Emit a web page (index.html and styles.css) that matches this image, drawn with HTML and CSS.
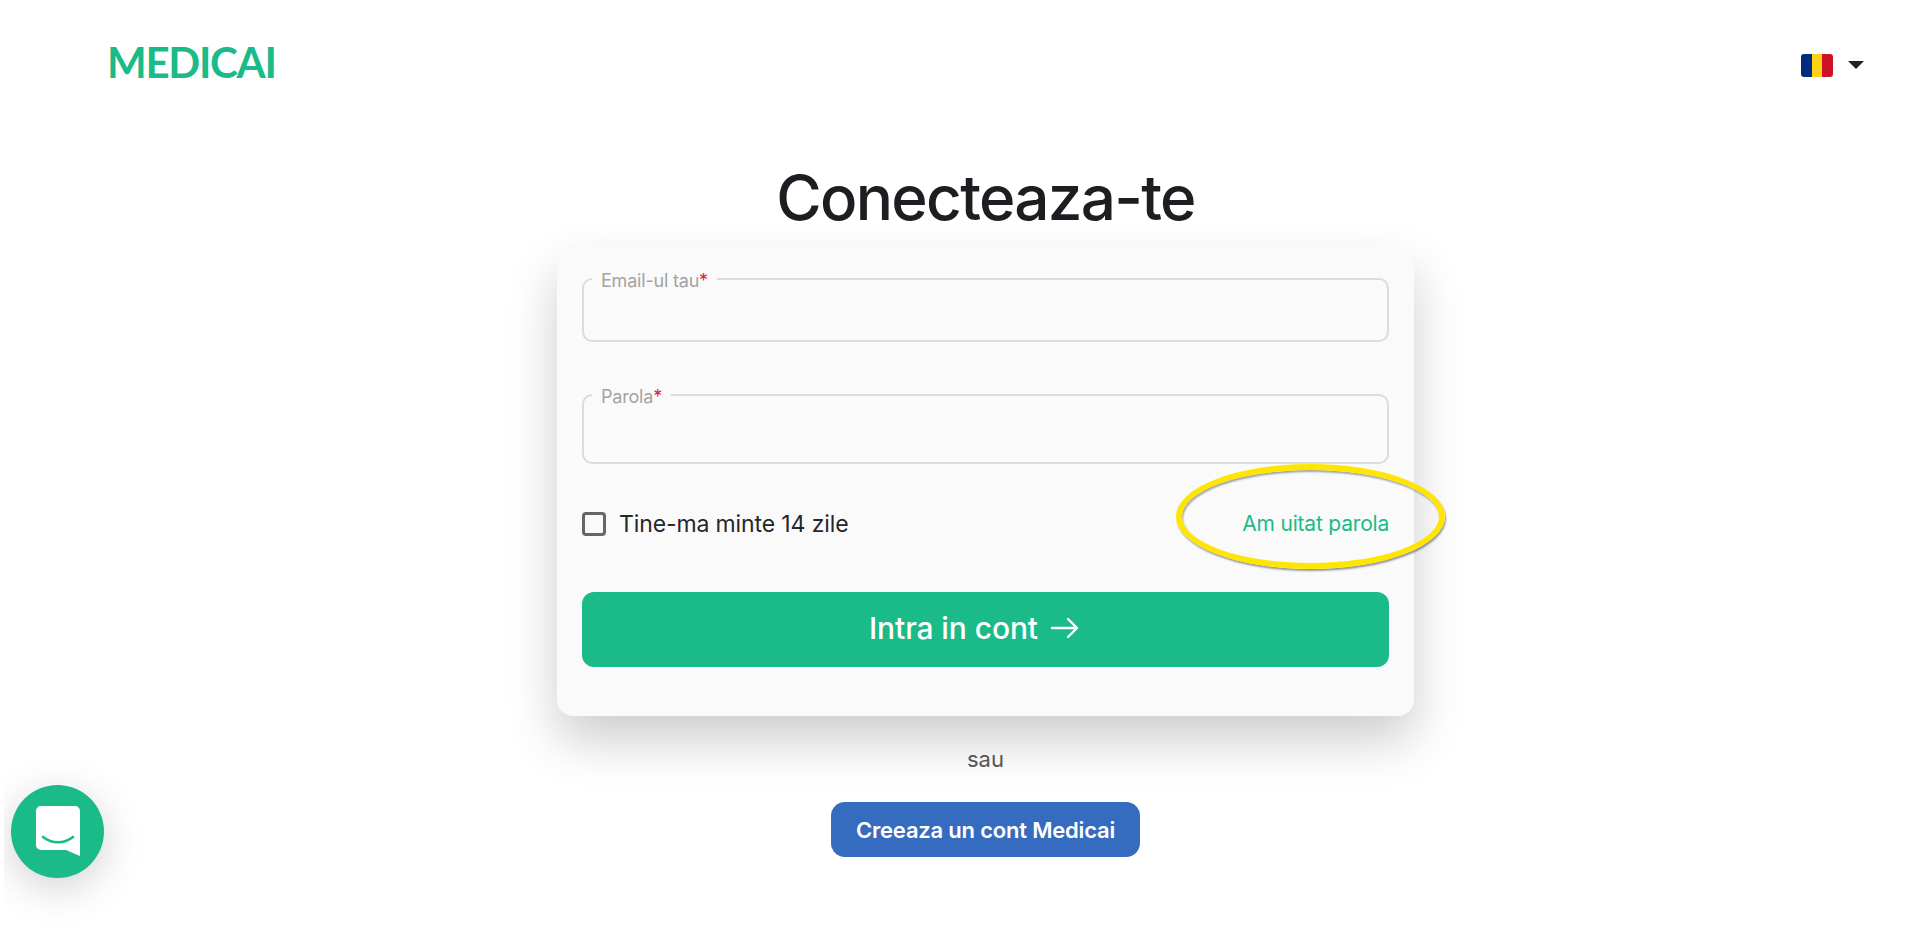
FILE: index.html
```html
<!DOCTYPE html>
<html lang="ro">
<head>
  <meta charset="UTF-8" />
  <meta name="viewport" content="width=device-width, initial-scale=1.0" />
  <title>Medicai - Conecteaza-te</title>
  <link rel="stylesheet" href="styles.css">
</head>
<body>
  <header class="topbar">
    <a class="logo" href="#">MEDICAI</a>
    <button class="lang" type="button" aria-label="Limba">
      <span class="flag"><i class="blue"></i><i class="yellow"></i><i class="red"></i></span>
      <span class="caret"></span>
    </button>
  </header>

  <main class="page">
    <h1>Conecteaza-te</h1>
    <form class="card">
      <fieldset class="field email">
        <legend>Email-ul tau<span class="req">*</span></legend>
        <input type="email">
      </fieldset>
      <fieldset class="field password">
        <legend>Parola<span class="req">*</span></legend>
        <input type="password">
      </fieldset>
      <div class="options">
        <label class="remember"><span class="box"></span>Tine-ma minte 14 zile</label>
        <a class="forgot" href="#">Am uitat parola<span class="ring"></span></a>
      </div>
      <button class="submit" type="button">Intra in cont
        <svg width="30" height="24" viewBox="0 0 30 24" fill="none" stroke="#fff" stroke-width="2.4" stroke-linecap="round" stroke-linejoin="round"><path d="M2 12h25M18 3l9 9-9 9"/></svg>
      </button>
    </form>
    <p class="or">sau</p>
    <a class="signup" href="#">Creeaza un cont Medicai</a>
  </main>

  <div class="chat-frame">
    <button class="chat" type="button" aria-label="Chat">
      <svg width="44" height="50" viewBox="0 0 44 50"><path d="M5 0h34a5 5 0 0 1 5 5v45l-14-6H5a5 5 0 0 1-5-5V5a5 5 0 0 1 5-5z" fill="#fff"/><path d="M7 31c9 7 21 7 30 0" fill="none" stroke="#1abb88" stroke-width="2.6" stroke-linecap="round"/></svg>
    </button>
  </div>
</body>
</html>
```

FILE: styles.css
```css
* {
  box-sizing: border-box;
}

body {
  margin: 0;
  height: 944px;
  overflow: hidden;
  font-family: 'Inter', sans-serif;
  background: #fff;
  color: #1c1e21;
}

.topbar {
  display: flex;
  justify-content: space-between;
  align-items: center;
  height: 124px;
  padding: 0 56px 0 107px;
}

.logo {
  font-family: 'Lato', sans-serif;
  font-size: 42px;
  font-weight: 700;
  letter-spacing: -1.3px;
  color: #1abb88;
  text-decoration: none;
}

.lang {
  display: flex;
  align-items: center;
  gap: 15px;
  padding: 6px 0 0;
  border: none;
  background: none;
}

.flag {
  display: flex;
  width: 32px;
  height: 23px;
  border-radius: 3px;
  overflow: hidden;
}

.flag i {
  flex: 1;
}

.flag .blue { background: #002b7f; }
.flag .yellow { background: #fcd116; }
.flag .red { background: #ce1126; }

.caret {
  width: 0;
  height: 0;
  border-left: 8px solid transparent;
  border-right: 8px solid transparent;
  border-top: 8px solid #222;
}

.page {
  display: flex;
  flex-direction: column;
  align-items: center;
  padding-left: 51px;
}

h1 {
  margin: 0;
  padding-top: 36px;
  height: 123px;
  font-size: 62px;
  line-height: 75px;
  font-weight: 500;
  letter-spacing: -1.7px;
  color: #1c1e21;
}

.card {
  position: relative;
  width: 857px;
  height: 469px;
  padding: 19px 25px 0;
  background: #fafafa;
  border-radius: 16px;
  box-shadow: 0 24px 50px rgba(0,0,0,0.2);
}

.field {
  margin: 0;
  padding: 0 16px 0 8px;
  border: 2px solid #dcdcdc;
  border-radius: 10px;
  min-width: 0;
}

.field.email {
  height: 76px;
  margin-bottom: 40px;
}

.field.password {
  height: 82px;
}

.field legend {
  padding: 4px 9px 0;
  font-size: 18px;
  line-height: 22px;
  letter-spacing: -0.2px;
  color: #a3a3a3;
}

.req {
  color: #e0203f;
}

.field input {
  width: 100%;
  height: 40px;
  border: none;
  outline: none;
  background: none;
}

.options {
  display: flex;
  justify-content: space-between;
  align-items: center;
  margin: 45px 0 53px;
  height: 30px;
}

.remember {
  display: flex;
  align-items: center;
  gap: 13px;
  font-size: 23px;
  letter-spacing: -0.12px;
  color: #24272b;
}

.box {
  width: 24px;
  height: 24px;
  border: 3px solid #666;
  border-radius: 4px;
}

.forgot {
  position: relative;
  margin-bottom: 2px;
  font-size: 21px;
  letter-spacing: -0.2px;
  color: #1abb88;
  text-decoration: none;
}

/* yellow annotation drawn over the link */
.ring {
  position: absolute;
  right: -56px;
  top: -47px;
  width: 269px;
  height: 105px;
  border: 6px solid #ffe600;
  border-radius: 50%;
  box-shadow: 1px 2px 2px rgba(0,0,0,0.4), inset 1px 2px 2px rgba(0,0,0,0.35);
}

.submit {
  display: flex;
  justify-content: center;
  align-items: center;
  gap: 12px;
  width: 100%;
  height: 75px;
  padding: 0 22px 3px 0;
  border: none;
  border-radius: 12px;
  background: #1abb88;
  color: #fff;
  font-family: inherit;
  font-size: 30px;
  font-weight: 500;
  letter-spacing: -0.1px;
}

.or {
  margin: 28px 0 28px;
  font-size: 22px;
  line-height: 30px;
  color: #555;
  position: relative;
}

.signup {
  display: flex;
  justify-content: center;
  align-items: center;
  width: 309px;
  height: 55px;
  border-radius: 14px;
  background: #356cc0;
  color: #fff;
  font-size: 22px;
  font-weight: 600;
  letter-spacing: -0.2px;
  text-decoration: none;
}

/* chat launcher, its shadow is cut off 4px from the window edge */
.chat-frame {
  position: fixed;
  left: 4px;
  top: 700px;
  width: 200px;
  height: 244px;
  overflow: hidden;
}

.chat {
  position: absolute;
  left: 7px;
  top: 85px;
  width: 93px;
  height: 93px;
  padding: 2px 0 0;
  border: none;
  border-radius: 50%;
  background: #1abb88;
  box-shadow: 0 10px 40px rgba(0,0,0,0.18);
}
```
